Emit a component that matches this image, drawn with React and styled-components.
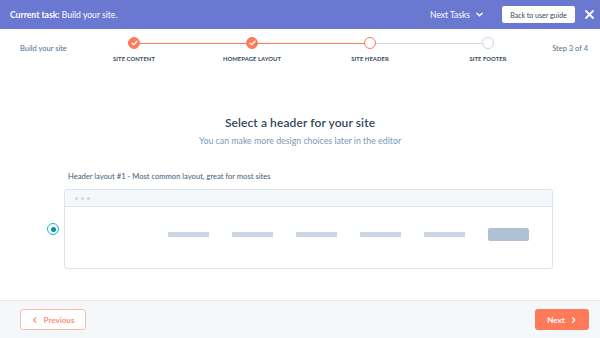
import React from "react";
import styled, { createGlobalStyle } from "styled-components";

const GlobalStyle = createGlobalStyle`
  html, body {
    margin: 0;
    padding: 0;
    background: #fff;
  }
  body {
    font-family: Lato, "Open Sans", sans-serif;
    color: #33475b;
  }
`;

const Page = styled.div`
  width: 600px;
  height: 338px;
  display: flex;
  flex-direction: column;
  overflow: hidden;
`;

const TaskBar = styled.div`
  height: 29px;
  background: #6a78d1;
  display: flex;
  align-items: center;
  padding: 0 6px 0 10px;
  color: #fff;
  font-size: 8.6px;
`;

const TaskText = styled.div`
  flex: 1;
  b {
    font-weight: 700;
  }
`;

const NextTasks = styled.div`
  display: flex;
  align-items: center;
  gap: 6px;
  margin-right: 19px;
  font-size: 8.5px;
`;

const GuideButton = styled.button`
  width: 73px;
  height: 17px;
  background: #fff;
  border: none;
  border-radius: 2px;
  font-family: inherit;
  font-size: 7px;
  color: #33475b;
  padding: 0;
  margin-right: 10px;
`;

const CloseIcon = styled.div`
  display: flex;
  align-items: center;
`;

const StepRow = styled.div`
  height: 38px;
  display: flex;
  align-items: flex-start;
  padding: 0 12px 0 20px;
  font-size: 7.5px;
  color: #516f90;
`;

const SideLabel = styled.div`
  padding-top: 15px;
  width: ${(p) => p.$w}px;
  flex: ${(p) => (p.$grow ? 1 : "none")};
  white-space: nowrap;
  text-align: ${(p) => p.$align || "left"};
`;

const Track = styled.div`
  display: grid;
  grid-template-columns: repeat(4, 118px);
  margin-left: 2px;
`;

const Step = styled.div`
  position: relative;
  display: flex;
  flex-direction: column;
  align-items: center;
  padding-top: 8px;
`;

const Line = styled.div`
  position: absolute;
  top: 14px;
  height: 1px;
  background: ${(p) => p.$color};
  left: ${(p) => (p.$side === "right" ? "50%" : "0")};
  right: ${(p) => (p.$side === "right" ? "0" : "50%")};
`;

const Dot = styled.div`
  position: relative;
  z-index: 1;
  width: 12px;
  height: 12px;
  border-radius: 50%;
  box-sizing: border-box;
  display: flex;
  align-items: center;
  justify-content: center;
  background: ${(p) => (p.$state === "done" ? "#ff7a59" : "#fff")};
  border: 1.5px solid
    ${(p) => (p.$state === "todo" ? "#cbd6e2" : "#ff7a59")};
`;

const StepLabel = styled.div`
  margin-top: 6px;
  font-size: 5.8px;
  font-weight: 700;
  text-transform: uppercase;
  color: #33475b;
  letter-spacing: 0.1px;
  white-space: nowrap;
`;

const Main = styled.div`
  flex: 1;
  display: flex;
  flex-direction: column;
  align-items: center;
`;

const Title = styled.h1`
  margin: 48px 0 0 0;
  font-size: 12px;
  font-weight: 600;
  color: #33475b;
  letter-spacing: 0.1px;
`;

const Subtitle = styled.p`
  margin: 5px 0 0 0;
  font-size: 8.8px;
  color: #7c98b6;
`;

const LayoutBlock = styled.div`
  align-self: stretch;
  padding: 0 47px 0 47px;
  margin-top: 25px;
`;

const LayoutLabel = styled.div`
  margin-left: 21px;
  font-size: 7.6px;
  color: #425b76;
`;

const OptionRow = styled.div`
  display: flex;
  align-items: center;
  margin-top: 8px;
`;

const Radio = styled.div`
  width: 12px;
  height: 12px;
  box-sizing: border-box;
  border-radius: 50%;
  border: 1.5px solid #0fb8d0;
  display: flex;
  align-items: center;
  justify-content: center;
  margin-right: 5px;
  &::after {
    content: "";
    width: 5px;
    height: 5px;
    border-radius: 50%;
    background: #0091ae;
  }
`;

const Browser = styled.div`
  flex: 1;
  height: 80px;
  border: 1px solid #dfe3eb;
  border-radius: 3px;
  box-sizing: border-box;
  overflow: hidden;
  display: flex;
  flex-direction: column;
`;

const BrowserBar = styled.div`
  height: 16px;
  flex: none;
  background: #f5f8fa;
  border-bottom: 1px solid #dfe3eb;
  display: flex;
  align-items: center;
  gap: 3px;
  padding-left: 10px;
`;

const BarDot = styled.span`
  width: 3px;
  height: 3px;
  border-radius: 50%;
  background: #cbd6e2;
`;

const BrowserBody = styled.div`
  flex: 1;
  display: flex;
  align-items: center;
  justify-content: flex-end;
  gap: 23px;
  padding: 0 23px 6px 0;
`;

const NavItem = styled.span`
  width: 41px;
  height: 5px;
  background: #cbd6e2;
`;

const NavButton = styled.span`
  width: 41px;
  height: 13px;
  border-radius: 2px;
  background: #b0c1d4;
`;

const Footer = styled.div`
  height: 37px;
  border-top: 1px solid #e3e8ef;
  background: #f5f8fa;
  display: flex;
  align-items: center;
  justify-content: space-between;
  padding: 0 11px 0 20px;
`;

const PrevButton = styled.button`
  width: 66px;
  height: 21px;
  box-sizing: border-box;
  border: 1px solid #ffb9a6;
  border-radius: 3px;
  background: #fff;
  color: #ff8f73;
  font-family: inherit;
  font-size: 8px;
  font-weight: 700;
  display: flex;
  align-items: center;
  justify-content: center;
  gap: 6px;
  padding: 0;
`;

const NextButton = styled.button`
  width: 54px;
  height: 21px;
  border: none;
  border-radius: 3px;
  background: #ff7a59;
  color: #fff;
  font-family: inherit;
  font-size: 8px;
  font-weight: 700;
  display: flex;
  align-items: center;
  justify-content: center;
  gap: 6px;
  padding: 0;
`;

function Check() {
  return (
    <svg width="7" height="6" viewBox="0 0 7 6">
      <path d="M1 3.2 L2.8 4.8 L6 1.2" fill="none" stroke="#fff" strokeWidth="1.3" strokeLinecap="round" strokeLinejoin="round" />
    </svg>
  );
}

function Chevron({ dir = "right", color, size = 6 }) {
  const d = dir === "right" ? "M2 1 L5 4 L2 7" : dir === "left" ? "M5 1 L2 4 L5 7" : "M1 2.5 L4 5.5 L7 2.5";
  return (
    <svg width={size} height={size} viewBox="0 0 8 8">
      <path d={d} fill="none" stroke={color} strokeWidth="1.6" strokeLinecap="round" strokeLinejoin="round" />
    </svg>
  );
}

const steps = [
  { label: "Site content", state: "done" },
  { label: "Homepage layout", state: "done" },
  { label: "Site header", state: "current" },
  { label: "Site footer", state: "todo" },
];

export default function App() {
  return (
    <Page>
      <GlobalStyle />
      <TaskBar>
        <TaskText>
          <b>Current task:</b> Build your site.
        </TaskText>
        <NextTasks>
          Next Tasks
          <Chevron dir="down" color="#fff" size={7} />
        </NextTasks>
        <GuideButton>Back to user guide</GuideButton>
        <CloseIcon>
          <svg width="9" height="9" viewBox="0 0 9 9">
            <path d="M1 1 L8 8 M8 1 L1 8" stroke="#fff" strokeWidth="1.8" strokeLinecap="round" />
          </svg>
        </CloseIcon>
      </TaskBar>

      <StepRow>
        <SideLabel $w={53}>Build your site</SideLabel>
        <Track>
          {steps.map((s, i) => (
            <Step key={s.label}>
              {i > 0 && <Line $side="left" $color={s.state === "todo" ? "#cbd6e2" : "#ff7a59"} />}
              {i < steps.length - 1 && (
                <Line $side="right" $color={steps[i + 1].state === "todo" ? "#cbd6e2" : "#ff7a59"} />
              )}
              <Dot $state={s.state}>{s.state === "done" && <Check />}</Dot>
              <StepLabel>{s.label}</StepLabel>
            </Step>
          ))}
        </Track>
        <SideLabel $grow $align="right">
          Step 3 of 4
        </SideLabel>
      </StepRow>

      <Main>
        <Title>Select a header for your site</Title>
        <Subtitle>You can make more design choices later in the editor</Subtitle>
        <LayoutBlock>
          <LayoutLabel>Header layout #1 - Most common layout, great for most sites</LayoutLabel>
          <OptionRow>
            <Radio />
            <Browser>
              <BrowserBar>
                <BarDot />
                <BarDot />
                <BarDot />
              </BrowserBar>
              <BrowserBody>
                <NavItem />
                <NavItem />
                <NavItem />
                <NavItem />
                <NavItem />
                <NavButton />
              </BrowserBody>
            </Browser>
          </OptionRow>
        </LayoutBlock>
      </Main>

      <Footer>
        <PrevButton>
          <Chevron dir="left" color="#ff8f73" />
          Previous
        </PrevButton>
        <NextButton>
          Next
          <Chevron dir="right" color="#fff" />
        </NextButton>
      </Footer>
    </Page>
  );
}
